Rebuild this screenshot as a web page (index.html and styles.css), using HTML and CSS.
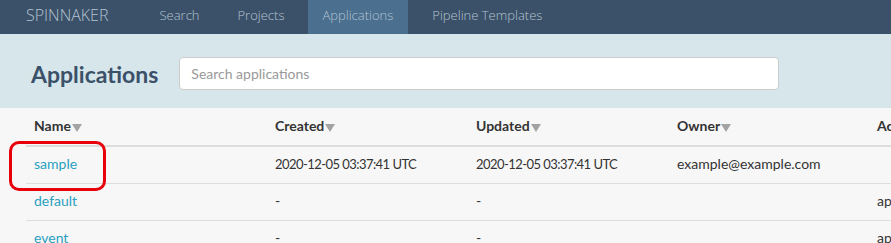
FILE: index.html
```html
<!DOCTYPE html>
<html lang="en">
<head>
  <meta charset="UTF-8" />
  <title>Spinnaker - Applications</title>
  <link rel="stylesheet" href="styles.css">
</head>
<body>
  <nav class="topbar">
    <span class="brand">SPINNAKER</span>
    <a class="nav-item">Search</a>
    <a class="nav-item">Projects</a>
    <a class="nav-item active">Applications</a>
    <a class="nav-item">Pipeline Templates</a>
  </nav>

  <header class="page-header">
    <h1>Applications</h1>
    <input type="text" class="search" placeholder="Search applications" />
  </header>

  <main class="content">
    <table class="apps">
      <thead>
        <tr>
          <th class="col-name">Name<span class="caret"></span></th>
          <th class="col-date">Created<span class="caret"></span></th>
          <th class="col-date">Updated<span class="caret"></span></th>
          <th class="col-owner">Owner<span class="caret"></span></th>
          <th>Account</th>
        </tr>
      </thead>
      <tbody>
        <tr>
          <td class="highlight"><a class="app-link">sample</a></td>
          <td class="date">2020-12-05 03:37:41 UTC</td>
          <td class="date">2020-12-05 03:37:41 UTC</td>
          <td>example@example.com</td>
          <td></td>
        </tr>
        <tr>
          <td><a class="app-link">default</a></td>
          <td>-</td>
          <td>-</td>
          <td></td>
          <td>appengine</td>
        </tr>
        <tr>
          <td><a class="app-link">event</a></td>
          <td>-</td>
          <td>-</td>
          <td></td>
          <td>appengine</td>
        </tr>
      </tbody>
    </table>
  </main>
</body>
</html>
```

FILE: styles.css
```css
html, body {
  margin: 0;
  overflow: hidden;
}
body {
  background-color: #f7f7f7;
  font-family: Lato, sans-serif;
  font-size: 14px;
  color: #333;
}
.topbar {
  display: flex;
  align-items: stretch;
  height: 34px;
  background: #3b5169;
  font-family: "Open Sans", sans-serif;
  font-weight: 300;
  font-size: 13px;
  color: #b4c3d1;
}
.brand {
  display: flex;
  align-items: center;
  padding-bottom: 4px;
  margin-left: 26px;
  margin-right: 37px;
  font-size: 16px;
}
.nav-item {
  display: flex;
  align-items: center;
  padding: 0 14px 4px;
  margin-right: 10px;
}
.nav-item.active {
  background: #4a6f8f;
  padding-right: 15px;
}
.page-header {
  display: flex;
  align-items: center;
  height: 69px;
  padding: 5px 0 0 31px;
  background: #d6e6eb;
}
h1 {
  margin: 0 21px 0 0;
  font-size: 23px;
  font-weight: 700;
  color: #3b5169;
}
.search {
  width: 600px;
  height: 33px;
  box-sizing: border-box;
  padding: 0 11px;
  border: 1px solid #ccc;
  border-radius: 4px;
  font-family: Lato, sans-serif;
  font-size: 14px;
  background: #fff;
}
.search::placeholder {
  color: #999;
}
.content {
  padding: 0 0 0 26px;
}
.apps {
  border-collapse: collapse;
  table-layout: fixed;
  width: 1040px;
}
.apps th, .apps td {
  text-align: left;
  white-space: nowrap;
  line-height: 20px;
}
.apps th {
  padding: 8px 8px 9px;
  border-bottom: 2px solid #ddd;
  font-weight: 700;
  color: #333;
}
.apps td {
  padding: 7px 8px 9px;
  border-bottom: 1px solid #ddd;
}
.apps td.date {
  font-size: 13px;
  letter-spacing: -0.55px;
}
.col-name { width: 225px; }
.col-date { width: 185px; }
.col-owner { width: 184px; }
.caret {
  display: inline-block;
  width: 0;
  height: 0;
  margin-left: 1px;
  border-left: 5px solid transparent;
  border-right: 5px solid transparent;
  border-top: 8px solid #a3a3a3;
  vertical-align: -1px;
}
.app-link {
  color: #2aa0c0;
}
.highlight {
  position: relative;
}
.highlight::after {
  content: "";
  position: absolute;
  left: -17px;
  top: -6px;
  width: 97px;
  height: 50px;
  box-sizing: border-box;
  border: 3px solid #e8000b;
  border-radius: 10px;
}
```
